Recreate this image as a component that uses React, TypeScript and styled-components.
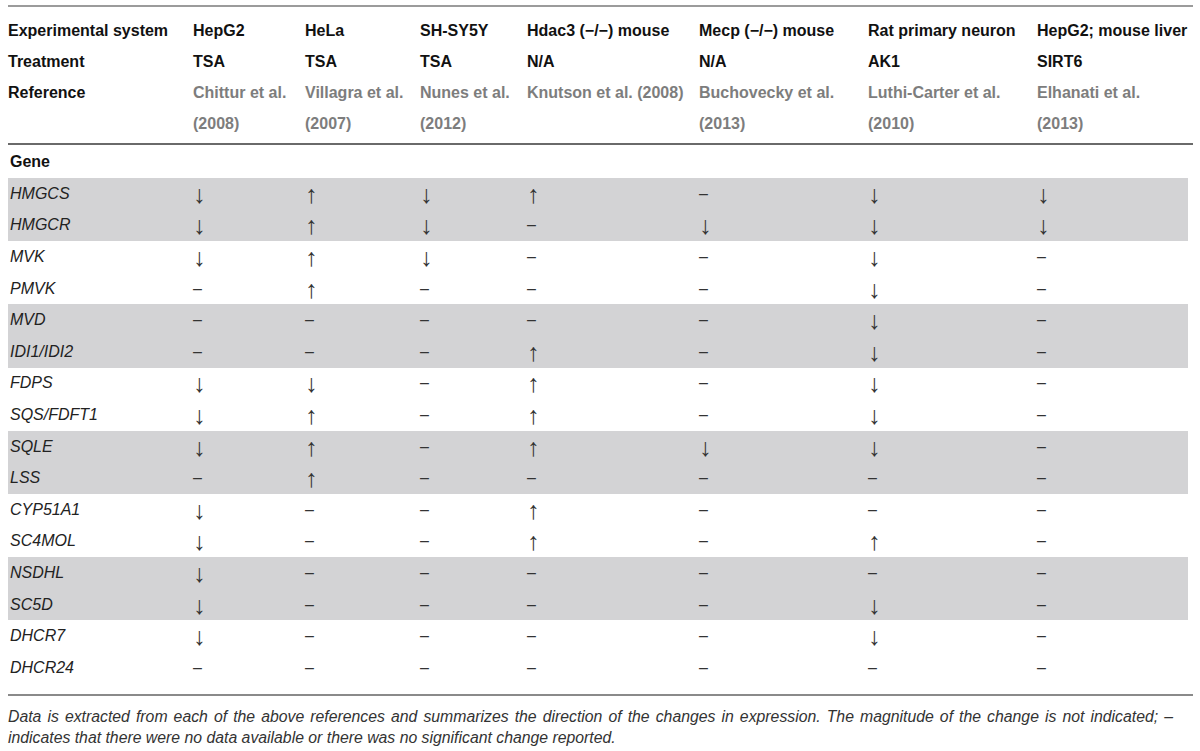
import React from 'react';
import styled, { createGlobalStyle } from 'styled-components';

const Global = createGlobalStyle`
  html, body { margin: 0; padding: 0; background: #ffffff; }
  body { font-family: "Liberation Sans", Arial, Helvetica, sans-serif; color: #111; }
`;

const COLS = '185px 112px 115px 107px 172px 169px 169px 151px';

const Page = styled.div`
  padding: 5px 0 0 8px;
`;

const Table = styled.div`
  width: 1185px;
  border-top: 2px solid #9b9b9b;
`;

const HeaderGroup = styled.div`
  padding: 8px 0 4px;
  border-bottom: 2px solid #6a6a6a;
`;

const HeadRow = styled.div`
  display: grid;
  grid-template-columns: ${COLS};
  width: 1180px;
  line-height: 31px;
  font-size: 16px;
  font-weight: bold;
`;

const HeadCell = styled.div<{ $muted?: boolean }>`
  color: ${(p) => (p.$muted ? '#7d7d7d' : '#111')};
  white-space: nowrap;
`;

const Line = styled.span`
  display: block;
`;

const GeneRow = styled.div`
  height: 33px;
  display: flex;
  align-items: center;
  padding-left: 2px;
  font-size: 16px;
  font-weight: bold;
  color: #111;
`;

const Body = styled.div`
  padding-bottom: 10px;
  border-bottom: 2px solid #8a8a8a;
`;

const DataRow = styled.div<{ $shaded: boolean }>`
  display: grid;
  grid-template-columns: ${COLS};
  width: 1180px;
  height: 31.6px;
  align-items: center;
  background: ${(p) => (p.$shaded ? '#d3d3d5' : 'transparent')};
  font-size: 16px;
`;

const GeneName = styled.div`
  font-style: italic;
  color: #222;
  padding-left: 2px;
`;

const Mark = styled.div<{ $dash: boolean }>`
  color: #333;
  font-size: ${(p) => (p.$dash ? '16px' : '25px')};
  line-height: ${(p) => (p.$dash ? '20px' : '20px')};
  padding-left: ${(p) => (p.$dash ? '0' : '0')};
`;

const Footer = styled.p`
  margin: 10px 0 0;
  width: 1165px;
  font-style: italic;
  font-size: 15.8px;
  line-height: 21px;
  color: #333;
  text-align: justify;
`;

const systems = [
  'HepG2',
  'HeLa',
  'SH-SY5Y',
  'Hdac3 (\u2212/\u2212) mouse',
  'Mecp (\u2212/\u2212) mouse',
  'Rat primary neuron',
  'HepG2; mouse liver',
];

const treatments = ['TSA', 'TSA', 'TSA', 'N/A', 'N/A', 'AK1', 'SIRT6'];

const references: string[][] = [
  ['Chittur et al.', '(2008)'],
  ['Villagra et al.', '(2007)'],
  ['Nunes et al.', '(2012)'],
  ['Knutson et al. (2008)'],
  ['Buchovecky et al.', '(2013)'],
  ['Luthi-Carter et al.', '(2010)'],
  ['Elhanati et al.', '(2013)'],
];

const D = '\u2193';
const U = '\u2191';
const N = '\u2013';

const genes: [string, string[]][] = [
  ['HMGCS', [D, U, D, U, N, D, D]],
  ['HMGCR', [D, U, D, N, D, D, D]],
  ['MVK', [D, U, D, N, N, D, N]],
  ['PMVK', [N, U, N, N, N, D, N]],
  ['MVD', [N, N, N, N, N, D, N]],
  ['IDI1/IDI2', [N, N, N, U, N, D, N]],
  ['FDPS', [D, D, N, U, N, D, N]],
  ['SQS/FDFT1', [D, U, N, U, N, D, N]],
  ['SQLE', [D, U, N, U, D, D, N]],
  ['LSS', [N, U, N, N, N, N, N]],
  ['CYP51A1', [D, N, N, U, N, N, N]],
  ['SC4MOL', [D, N, N, U, N, U, N]],
  ['NSDHL', [D, N, N, N, N, N, N]],
  ['SC5D', [D, N, N, N, N, D, N]],
  ['DHCR7', [D, N, N, N, N, D, N]],
  ['DHCR24', [N, N, N, N, N, N, N]],
];

export default function App() {
  return (
    <Page>
      <Global />
      <Table>
        <HeaderGroup>
          <HeadRow>
            <HeadCell>Experimental system</HeadCell>
            {systems.map((s, i) => (
              <HeadCell key={i}>{s}</HeadCell>
            ))}
          </HeadRow>
          <HeadRow>
            <HeadCell>Treatment</HeadCell>
            {treatments.map((t, i) => (
              <HeadCell key={i}>{t}</HeadCell>
            ))}
          </HeadRow>
          <HeadRow>
            <HeadCell>Reference</HeadCell>
            {references.map((r, i) => (
              <HeadCell key={i} $muted>
                {r.map((l, j) => (
                  <Line key={j}>{l}</Line>
                ))}
              </HeadCell>
            ))}
          </HeadRow>
        </HeaderGroup>
        <GeneRow>Gene</GeneRow>
        <Body>
          {genes.map(([name, vals], i) => (
            <DataRow key={name} $shaded={Math.floor(i / 2) % 2 === 0}>
              <GeneName>{name}</GeneName>
              {vals.map((v, j) => (
                <Mark key={j} $dash={v === N}>
                  {v}
                </Mark>
              ))}
            </DataRow>
          ))}
        </Body>
      </Table>
      <Footer>
        Data is extracted from each of the above references and summarizes the direction of the changes in expression. The magnitude of the change is not indicated; {'\u2013'} indicates that there were no data available or there was no significant change reported.
      </Footer>
    </Page>
  );
}
